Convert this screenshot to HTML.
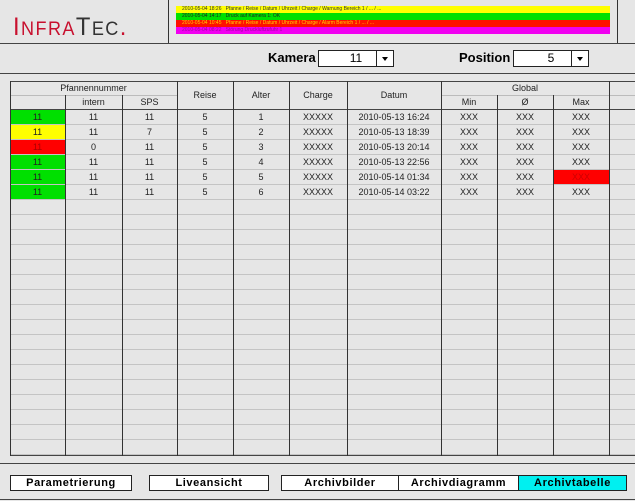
<!DOCTYPE html>
<html><head><meta charset="utf-8"><style>
*{margin:0;padding:0;box-sizing:border-box}
body{width:635px;height:501px;background:#e6e6e6;font-family:"Liberation Sans",sans-serif;position:relative;overflow:hidden}
.a{position:absolute}
.hl{position:absolute;height:1px;background:#444}
.vl{position:absolute;width:1px;background:#333}
.al{position:absolute;left:176px;width:434px;height:7px;font-size:5px;line-height:7px;padding-left:6px;white-space:nowrap}
.sel{position:absolute;height:17px;background:#fff;border:1px solid #222;font-size:12px;text-align:center;line-height:15px}
.sel i{position:absolute;right:0;top:0;width:17px;height:15px;border-left:1px solid #222;background:#fff}
.sel i:after{content:"";position:absolute;left:5px;top:6px;border:3.5px solid transparent;border-top:4px solid #000}
.lbl{position:absolute;font-size:13px;font-weight:bold}
.c{position:absolute;font-size:9px;color:#222;text-align:center;line-height:15px;height:15px}
.btn{position:absolute;top:475px;height:16px;background:#fff;border:1px solid #222;font-size:11px;font-weight:bold;text-align:center;line-height:14px;letter-spacing:0.6px}
</style></head><body>
<div class="hl" style="left:0;top:43px;width:635px"></div>
<div class="vl" style="left:168px;top:0;height:43px"></div>
<div class="vl" style="left:617px;top:0;height:43px"></div>
<div class="a" style="left:13px;top:13px;font-size:25px;letter-spacing:1.5px;color:#c8102e;transform:scaleX(0.95);transform-origin:left">I<span style="font-size:19px">NFRA</span><span style="color:#333">T<span style="font-size:19px">EC</span></span>.</div>
<div class="al" style="top:6px;background:#ffff00;color:#333">2010-05-04 18:26 &nbsp; Pfanne / Reise / Datum / Uhrzeit / Charge / Warnung Bereich 1 / ... / ...</div>
<div class="al" style="top:13px;background:#00e000;color:#222">2010-05-04 14:17 &nbsp; Druck auf Kamera 1: OK</div>
<div class="al" style="top:20px;background:#ff1000;color:#ffd000">2010-05-04 10:45 &nbsp; Pfanne / Reise / Datum / Uhrzeit / Charge / Alarm Bereich 1 / ... / ...</div>
<div class="al" style="top:27px;background:#f000f0;color:#a000a0">2010-05-04 08:22 &nbsp; Störung Druckluftzufuhr 1</div>
<div class="lbl" style="left:268px;top:50px">Kamera</div>
<div class="sel" style="left:318px;top:50px;width:76px">11<i></i></div>
<div class="lbl" style="left:459px;top:50px">Position</div>
<div class="sel" style="left:513px;top:50px;width:76px">5<i></i></div>
<div class="hl" style="left:0;top:73px;width:635px"></div>
<div class="a" style="left:10px;top:110px;width:625px;height:345px;background:repeating-linear-gradient(to bottom,transparent 0,transparent 14px,#c4c4c4 14px,#c4c4c4 15px)"></div>
<div class="hl" style="left:10px;top:81px;width:625px"></div>
<div class="hl" style="left:10px;top:95px;width:167px;background:#bbb"></div>
<div class="hl" style="left:441px;top:95px;width:194px;background:#bbb"></div>
<div class="hl" style="left:10px;top:109px;width:625px"></div>
<div class="hl" style="left:10px;top:455px;width:625px"></div>
<div class="vl" style="left:10px;top:81px;height:375px"></div>
<div class="vl" style="left:65px;top:95px;height:361px"></div>
<div class="vl" style="left:122px;top:95px;height:361px"></div>
<div class="vl" style="left:177px;top:81px;height:375px"></div>
<div class="vl" style="left:233px;top:81px;height:375px"></div>
<div class="vl" style="left:289px;top:81px;height:375px"></div>
<div class="vl" style="left:347px;top:81px;height:375px"></div>
<div class="vl" style="left:441px;top:81px;height:375px"></div>
<div class="vl" style="left:497px;top:95px;height:361px"></div>
<div class="vl" style="left:553px;top:95px;height:361px"></div>
<div class="vl" style="left:609px;top:81px;height:375px"></div>
<div class="c" style="left:10px;top:81px;width:167px">Pfannennummer</div>
<div class="c" style="left:65px;top:95px;width:57px">intern</div>
<div class="c" style="left:122px;top:95px;width:55px">SPS</div>
<div class="c" style="left:177px;top:88px;width:56px">Reise</div>
<div class="c" style="left:233px;top:88px;width:56px">Alter</div>
<div class="c" style="left:289px;top:88px;width:58px">Charge</div>
<div class="c" style="left:347px;top:88px;width:94px">Datum</div>
<div class="c" style="left:441px;top:81px;width:168px">Global</div>
<div class="c" style="left:441px;top:95px;width:56px">Min</div>
<div class="c" style="left:497px;top:95px;width:56px">Ø</div>
<div class="c" style="left:553px;top:95px;width:56px">Max</div>
<div class="a" style="left:11px;top:110px;width:54px;height:14px;background:#00e000"></div>
<div class="a" style="left:11px;top:125px;width:54px;height:14px;background:#ffff00"></div>
<div class="a" style="left:11px;top:140px;width:54px;height:14px;background:#f00"></div>
<div class="a" style="left:11px;top:155px;width:54px;height:14px;background:#00e000"></div>
<div class="a" style="left:11px;top:170px;width:54px;height:14px;background:#00e000"></div>
<div class="a" style="left:11px;top:185px;width:54px;height:14px;background:#00e000"></div>
<div class="a" style="left:554px;top:170px;width:55px;height:14px;background:#f00"></div>
<div class="a" style="left:0;top:110px">
<div class="c" style="left:10px;top:0;width:55px">11</div><div class="c" style="left:65px;top:0;width:57px">11</div><div class="c" style="left:122px;top:0;width:55px">11</div><div class="c" style="left:177px;top:0;width:56px">5</div><div class="c" style="left:233px;top:0;width:56px">1</div><div class="c" style="left:289px;top:0;width:58px">XXXXX</div><div class="c" style="left:347px;top:0;width:94px">2010-05-13 16:24</div><div class="c" style="left:441px;top:0;width:56px">XXX</div><div class="c" style="left:497px;top:0;width:56px">XXX</div><div class="c" style="left:553px;top:0;width:56px">XXX</div>
</div>
<div class="a" style="left:0;top:125px">
<div class="c" style="left:10px;top:0;width:55px">11</div><div class="c" style="left:65px;top:0;width:57px">11</div><div class="c" style="left:122px;top:0;width:55px">7</div><div class="c" style="left:177px;top:0;width:56px">5</div><div class="c" style="left:233px;top:0;width:56px">2</div><div class="c" style="left:289px;top:0;width:58px">XXXXX</div><div class="c" style="left:347px;top:0;width:94px">2010-05-13 18:39</div><div class="c" style="left:441px;top:0;width:56px">XXX</div><div class="c" style="left:497px;top:0;width:56px">XXX</div><div class="c" style="left:553px;top:0;width:56px">XXX</div>
</div>
<div class="a" style="left:0;top:140px">
<div class="c" style="left:10px;top:0;width:55px;color:#a00">11</div><div class="c" style="left:65px;top:0;width:57px">0</div><div class="c" style="left:122px;top:0;width:55px">11</div><div class="c" style="left:177px;top:0;width:56px">5</div><div class="c" style="left:233px;top:0;width:56px">3</div><div class="c" style="left:289px;top:0;width:58px">XXXXX</div><div class="c" style="left:347px;top:0;width:94px">2010-05-13 20:14</div><div class="c" style="left:441px;top:0;width:56px">XXX</div><div class="c" style="left:497px;top:0;width:56px">XXX</div><div class="c" style="left:553px;top:0;width:56px">XXX</div>
</div>
<div class="a" style="left:0;top:155px">
<div class="c" style="left:10px;top:0;width:55px">11</div><div class="c" style="left:65px;top:0;width:57px">11</div><div class="c" style="left:122px;top:0;width:55px">11</div><div class="c" style="left:177px;top:0;width:56px">5</div><div class="c" style="left:233px;top:0;width:56px">4</div><div class="c" style="left:289px;top:0;width:58px">XXXXX</div><div class="c" style="left:347px;top:0;width:94px">2010-05-13 22:56</div><div class="c" style="left:441px;top:0;width:56px">XXX</div><div class="c" style="left:497px;top:0;width:56px">XXX</div><div class="c" style="left:553px;top:0;width:56px">XXX</div>
</div>
<div class="a" style="left:0;top:170px">
<div class="c" style="left:10px;top:0;width:55px">11</div><div class="c" style="left:65px;top:0;width:57px">11</div><div class="c" style="left:122px;top:0;width:55px">11</div><div class="c" style="left:177px;top:0;width:56px">5</div><div class="c" style="left:233px;top:0;width:56px">5</div><div class="c" style="left:289px;top:0;width:58px">XXXXX</div><div class="c" style="left:347px;top:0;width:94px">2010-05-14 01:34</div><div class="c" style="left:441px;top:0;width:56px">XXX</div><div class="c" style="left:497px;top:0;width:56px">XXX</div><div class="c" style="left:553px;top:0;width:56px;color:#c00">XXX</div>
</div>
<div class="a" style="left:0;top:185px">
<div class="c" style="left:10px;top:0;width:55px">11</div><div class="c" style="left:65px;top:0;width:57px">11</div><div class="c" style="left:122px;top:0;width:55px">11</div><div class="c" style="left:177px;top:0;width:56px">5</div><div class="c" style="left:233px;top:0;width:56px">6</div><div class="c" style="left:289px;top:0;width:58px">XXXXX</div><div class="c" style="left:347px;top:0;width:94px">2010-05-14 03:22</div><div class="c" style="left:441px;top:0;width:56px">XXX</div><div class="c" style="left:497px;top:0;width:56px">XXX</div><div class="c" style="left:553px;top:0;width:56px">XXX</div>
</div>
<div class="hl" style="left:0;top:463px;width:635px"></div>
<div class="btn" style="left:10px;width:122px">Parametrierung</div>
<div class="btn" style="left:149px;width:120px">Liveansicht</div>
<div class="btn" style="left:281px;width:118px">Archivbilder</div>
<div class="btn" style="left:398px;width:121px">Archivdiagramm</div>
<div class="btn" style="left:518px;width:109px;background:#00f0f0">Archivtabelle</div>
<div class="hl" style="left:0;top:499px;width:635px"></div>
</body></html>
